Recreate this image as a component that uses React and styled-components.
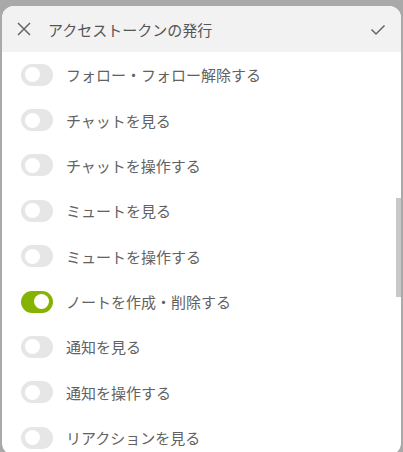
import React, { useState } from 'react';
import styled, { createGlobalStyle } from 'styled-components';

const GlobalStyle = createGlobalStyle`
  html, body {
    margin: 0;
    padding: 0;
    background: #a9a9a9;
    overflow: hidden;
  }
  body {
    font-family: "Noto Sans CJK JP", "Noto Sans", sans-serif;
  }
`;

const permissions = [
  { label: 'フォロー・フォロー解除する', on: false },
  { label: 'チャットを見る', on: false },
  { label: 'チャットを操作する', on: false },
  { label: 'ミュートを見る', on: false },
  { label: 'ミュートを操作する', on: false },
  { label: 'ノートを作成・削除する', on: true },
  { label: '通知を見る', on: false },
  { label: '通知を操作する', on: false },
  { label: 'リアクションを見る', on: false },
];

const CloseIcon = () => (
  <svg width="14" height="14" viewBox="0 0 14 14">
    <path d="M1 1 L13 13 M13 1 L1 13" stroke="#666" strokeWidth="1.5" fill="none" />
  </svg>
);

const CheckIcon = () => (
  <svg width="16" height="12" viewBox="0 0 16 12">
    <path d="M1.5 5.5 L6 10 L14.5 1.5" stroke="#666" strokeWidth="1.5" fill="none" />
  </svg>
);

const Switch = ({ checked, onClick }) => (
  <Track checked={checked} onClick={onClick}>
    <Knob checked={checked} />
  </Track>
);

const App = () => {
  const [items, setItems] = useState(permissions);

  const toggle = (i) =>
    setItems((prev) => prev.map((p, j) => (j === i ? { ...p, on: !p.on } : p)));

  return (
    <>
      <GlobalStyle />
      <Window>
        <Header>
          <HeaderButton>
            <CloseIcon />
          </HeaderButton>
          <Title>アクセストークンの発行</Title>
          <HeaderButton>
            <CheckIcon />
          </HeaderButton>
        </Header>
        <Body>
          <List>
            {items.map((item, i) => (
              <Row key={item.label}>
                <Switch checked={item.on} onClick={() => toggle(i)} />
                <Label>{item.label}</Label>
              </Row>
            ))}
          </List>
          <ScrollThumb />
        </Body>
      </Window>
    </>
  );
};

const Window = styled.div`
  margin: 6px 2px 0;
  height: 449px;
  background: #fff;
  border-radius: 12px;
  overflow: hidden;
  display: flex;
  flex-direction: column;
`;

const Header = styled.header`
  display: flex;
  align-items: center;
  height: 46px;
  flex-shrink: 0;
  background: #f2f2f2;
`;

const HeaderButton = styled.button`
  display: flex;
  align-items: center;
  justify-content: center;
  width: 44px;
  height: 46px;
  padding: 0;
  border: none;
  background: none;
  cursor: pointer;

  &:last-child {
    width: 46px;
    padding-top: 1px;
  }
`;

const Title = styled.div`
  flex: 1;
  margin-left: 2px;
  font-size: 15px;
  font-weight: 400;
  color: #555;
`;

const Body = styled.div`
  position: relative;
  flex: 1;
`;

const List = styled.div`
  display: flex;
  flex-direction: column;
  padding-left: 19px;
`;

const Row = styled.div`
  display: flex;
  align-items: center;
  height: 45.375px;
`;

const Track = styled.div`
  position: relative;
  flex-shrink: 0;
  width: 32px;
  height: 22px;
  border-radius: 999px;
  background: ${(p) => (p.checked ? '#86b300' : '#e6e6e6')};
  cursor: pointer;
`;

const Knob = styled.div`
  position: absolute;
  top: 3.5px;
  left: ${(p) => (p.checked ? '13px' : '4px')};
  width: 15px;
  height: 15px;
  border-radius: 50%;
  background: #fff;
`;

const Label = styled.span`
  margin-left: 13px;
  font-size: 15px;
  color: #626262;
`;

const ScrollThumb = styled.div`
  position: absolute;
  right: 0;
  top: 146px;
  width: 5px;
  height: 99px;
  background: #c8c8c8;
`;

export default App;
